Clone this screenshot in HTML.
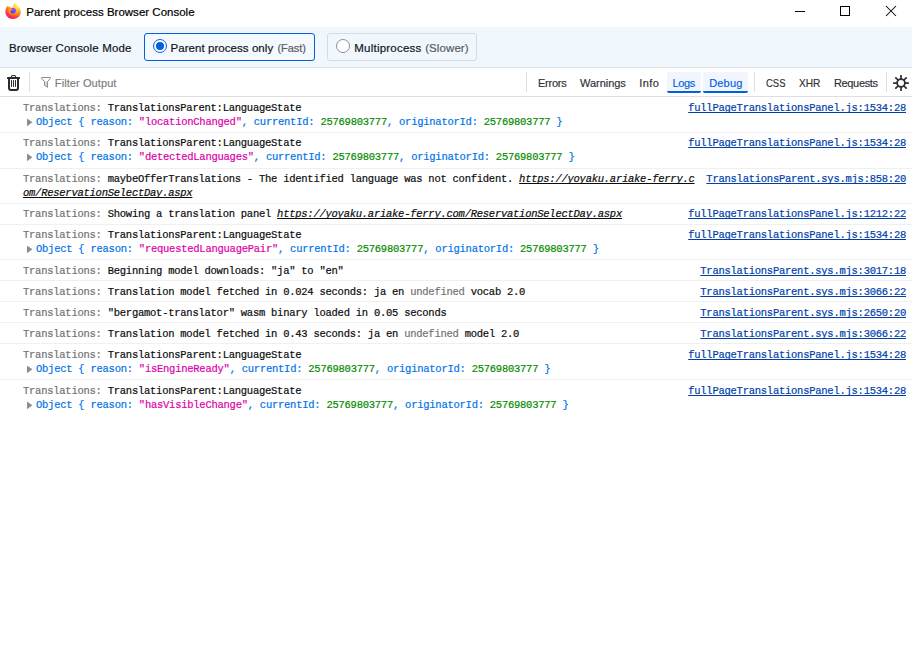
<!DOCTYPE html>
<html lang="en">
<head>
<meta charset="utf-8">
<title>Parent process Browser Console</title>
<style>
html,body{margin:0;padding:0;}
body{width:912px;height:666px;overflow:hidden;background:#fff;position:relative;
  font-family:"Liberation Sans",sans-serif;color:#0c0c0d;}
.abs{position:absolute;}
/* title bar */
#titlebar{left:0;top:0;width:912px;height:27px;background:#fff;}
/* mode bar */
#modebar{left:0;top:27px;width:912px;height:40px;background:#f0f8fe;border-bottom:1px solid #dfe3e8;}
.sans12{font-size:12px;line-height:15px;white-space:pre;color:#15141a;-webkit-text-stroke:0.2px currentColor;}
.modebtn{top:33px;height:26px;border:1px solid #d6dbe1;border-radius:3px;background:#f0f8fe;}
.modebtn.sel{border-color:#0060df;background:#f3f9ff;}
.radio{width:12px;height:12px;border-radius:50%;border:1px solid #8f8f9d;background:#fff;}
.radio.on{border-color:#0060df;}
.radio.on::after{content:"";position:absolute;left:2px;top:2px;width:8px;height:8px;border-radius:50%;background:#0060df;}
.dim{color:#5b5b66;}
/* filter toolbar */
#toolbar{left:0;top:68px;width:912px;height:28px;background:#fff;border-bottom:1px solid #e0e0e2;}
.vsep{width:1px;background:#e0e0e2;top:72px;height:20px;}
.sans11{font-size:11px;line-height:14px;white-space:pre;color:#2e2e33;-webkit-text-stroke:0.15px currentColor;}
.fbtn{top:72px;height:21px;border-radius:2px;background:#f1f5fd;overflow:hidden;}
.fbtn::after{content:"";position:absolute;left:0;right:0;bottom:0;height:2px;background:#0060df;}
.blue{color:#0060df;}
/* console output */
.row{left:0;width:912px;border-top:1px solid #f0f0f1;}
.ln{font-family:"Liberation Mono",monospace;font-size:10.5px;letter-spacing:-0.251px;line-height:14px;white-space:pre;color:#0c0c0d;-webkit-text-stroke:0.2px currentColor;}
.pre{color:#737373;}
.obj{color:#0074e8;}
.str{color:#dd00a9;}
.num{color:#058b00;}
.loc{color:#003eaa;text-decoration:underline;text-decoration-skip-ink:none;right:6px;}
.url{font-style:italic;text-decoration:underline;text-decoration-skip-ink:none;}

</style>
</head>
<body>
<div id="titlebar" class="abs"></div>
<svg class="abs" style="left:5px;top:3px" width="16" height="16" viewBox="0 0 16 16">
<defs>
<radialGradient id="fg1" gradientUnits="userSpaceOnUse" cx="11.500" cy="2" r="15"><stop offset="0" stop-color="#fff44f"/><stop offset="0.280" stop-color="#ffd43a"/><stop offset="0.500" stop-color="#ffa020"/><stop offset="0.660" stop-color="#ff7420"/><stop offset="0.800" stop-color="#ff4040"/><stop offset="0.930" stop-color="#f01a6e"/><stop offset="1" stop-color="#e31587"/></radialGradient>
<linearGradient id="fg2" x1="0.800" y1="0.100" x2="0.250" y2="0.950"><stop offset="0" stop-color="#c940f5"/><stop offset="0.500" stop-color="#7a4df0"/><stop offset="1" stop-color="#3c40d8"/></linearGradient>
<linearGradient id="fg3" x1="0" y1="0" x2="1" y2="0.600"><stop offset="0" stop-color="#ff8a16"/><stop offset="1" stop-color="#ffbd2f"/></linearGradient>
</defs>
<path d="M10.200 0.200C11.500 1.200 12.300 2.300 12.800 3.200C14.600 4.600 15.700 6.600 15.700 8.900C15.700 12.800 12.300 15.900 8.100 15.900C3.800 15.900 0.400 12.800 0.400 8.700C0.400 6.300 1.300 4.200 2.600 2.700C2.700 3.400 3 3.900 3.400 4.200C3.600 3.600 4 3.200 4.500 2.900C4.900 3.800 5.500 4.500 6.300 4.900C6.700 4.600 7.200 4.400 7.800 4.400C7.500 2.800 8.500 1 10.200 0.200Z" fill="url(#fg1)"/>
<circle cx="8.100" cy="7.600" r="2.950" fill="url(#fg2)"/>
<path d="M3.100 5.200C4.600 6 6.400 5.700 7.800 6.200C6.900 6.700 5.900 7 5.400 8.100C5 9.100 5.300 10.200 6.100 11.100C4.200 10.100 3 7.800 3.100 5.200Z" fill="url(#fg3)"/>
</svg>
<div class="abs sans12" id="title" style="left:26.25px;top:5px;font-size:11.5px;letter-spacing:0.007px;color:#000">Parent process Browser Console</div>
<svg class="abs" style="left:780px;top:0" width="132" height="27" viewBox="0 0 132 27" shape-rendering="crispEdges">
<rect x="15" y="11" width="10" height="1" fill="#000"/>
<rect x="60.5" y="6.500" width="9" height="9" fill="none" stroke="#000" stroke-width="1"/>
<g shape-rendering="geometricPrecision" stroke="#000" stroke-width="1.05" fill="none"><path d="M106 6L116 16M116 6L106 16"/></g>
</svg>
<div id="modebar" class="abs"></div>
<div class="abs sans12" id="bcm" style="left:9.00px;top:41px;font-size:11.5px;letter-spacing:0.151px;">Browser Console Mode</div>
<div class="abs modebtn sel" style="left:144px;width:169px"></div>
<div class="abs radio on" style="left:153px;top:39px"></div>
<div class="abs sans12" id="ppo" style="left:170.50px;top:41px;font-size:11.5px;letter-spacing:0.056px;">Parent process only</div>
<div class="abs sans12 dim" id="fast" style="left:277.50px;top:41px;font-size:11px;letter-spacing:-0.075px;">(Fast)</div>
<div class="abs modebtn" style="left:327px;width:148px"></div>
<div class="abs radio" style="left:336px;top:39px"></div>
<div class="abs sans12" id="mp" style="left:354.25px;top:41px;font-size:11.5px;letter-spacing:0.227px;">Multiprocess</div>
<div class="abs sans12 dim" id="slow" style="left:425.15px;top:41px;font-size:11.5px;letter-spacing:0.096px;">(Slower)</div>
<div id="toolbar" class="abs"></div>
<svg class="abs" style="left:5px;top:74px" width="16" height="18" viewBox="0 0 16 18" fill="none" stroke="#2b2b30">
<rect x="2" y="3" width="13" height="2" rx="0.600" fill="#2b2b30" stroke="none"/>
<path d="M6.500 3.200V2.600a1.100 1.100 0 0 1 1.100-1.100h1.800a1.100 1.100 0 0 1 1.100 1.100V3.200" stroke-width="1.200"/>
<path d="M4 4.500V14a2 2 0 0 0 2 2h5a2 2 0 0 0 2-2V4.500" stroke-width="2"/>
<path d="M6.500 6.500V12.500M8.500 6.500V12.500M10.500 6.500V12.500" stroke-width="1" stroke-linecap="round"/>
</svg>
<div class="abs vsep" style="left:29px"></div>
<svg class="abs" style="left:40px;top:76px" width="12" height="12" viewBox="0 0 12 12" fill="none" stroke="#8e8e93" stroke-width="1" stroke-linejoin="round">
<path d="M4.500 5.600H7.500V11.300L4.500 9.400Z" fill="#d6d6d9" stroke="none"/>
<path d="M1.500 1.500H10.500V2.300L7.500 5.600V11.300L4.500 9.400V5.600L1.500 2.300Z"/>
</svg>
<div class="abs sans11" id="fo" style="left:54.83px;top:76px;font-size:11px;letter-spacing:0.088px;color:#7a7a7e">Filter Output</div>
<div class="abs vsep" style="left:526px"></div>
<div class="abs sans11" id="t_err" style="left:537.98px;top:76px;font-size:11px;letter-spacing:-0.235px;">Errors</div>
<div class="abs sans11" id="t_warn" style="left:580.00px;top:76px;font-size:11px;letter-spacing:-0.036px;">Warnings</div>
<div class="abs sans11" id="t_info" style="left:639.35px;top:76px;font-size:11px;letter-spacing:0.400px;">Info</div>
<div class="abs fbtn" style="left:667px;width:34px"></div>
<div class="abs sans11 blue" id="t_logs" style="left:672.50px;top:76px;font-size:11px;letter-spacing:-0.333px;">Logs</div>
<div class="abs fbtn" style="left:703px;width:45px"></div>
<div class="abs sans11 blue" id="t_debug" style="left:709.25px;top:76px;font-size:11px;letter-spacing:0.156px;">Debug</div>
<div class="abs vsep" style="left:754px"></div>
<div class="abs sans11" id="t_css" style="left:766.07px;top:76px;font-size:11px;transform:scaleX(0.8598);transform-origin:0 0;">CSS</div>
<div class="abs sans11" id="t_xhr" style="left:799.46px;top:76px;font-size:11px;transform:scaleX(0.9238);transform-origin:0 0;">XHR</div>
<div class="abs sans11" id="t_req" style="left:833.90px;top:76px;font-size:11px;letter-spacing:-0.325px;">Requests</div>
<div class="abs vsep" style="left:886px"></div>
<svg class="abs" style="left:893px;top:75px" width="16" height="16" viewBox="0 0 16 16" fill="none" stroke="#2f2f33" stroke-linecap="round"><circle cx="8" cy="8" r="3.900" stroke-width="1.800"/><path d="M12.60 8.00L15.30 8.00M11.25 11.25L13.16 13.16M8.00 12.60L8.00 15.30M4.75 11.25L2.84 13.16M3.40 8.00L0.70 8.00M4.75 4.75L2.84 2.84M8.00 3.40L8.00 0.70M11.25 4.75L13.16 2.84" stroke-width="1.750"/></svg>
<div class="abs ln" style="left:23px;top:101px"><span class="pre">Translations:</span> TranslationsParent:LanguageState</div>
<svg class="abs" style="left:26px;top:118px" width="8" height="10" viewBox="0 0 8 10"><path d="M1 0.400L6.400 4.300L1 8.200Z" fill="#8c8c8c"/></svg>
<div class="abs ln" style="left:36px;top:115px"><span class="obj">Object { reason: </span><span class="str">"locationChanged"</span><span class="obj">, currentId: </span><span class="num">25769803777</span><span class="obj">, originatorId: </span><span class="num">25769803777</span><span class="obj"> }</span></div>
<div class="abs ln loc" style="top:101px">fullPageTranslationsPanel.js:1534:28</div>
<div class="abs row" style="top:132px"></div>
<div class="abs ln" style="left:23px;top:136px"><span class="pre">Translations:</span> TranslationsParent:LanguageState</div>
<svg class="abs" style="left:26px;top:153px" width="8" height="10" viewBox="0 0 8 10"><path d="M1 0.400L6.400 4.300L1 8.200Z" fill="#8c8c8c"/></svg>
<div class="abs ln" style="left:36px;top:150px"><span class="obj">Object { reason: </span><span class="str">"detectedLanguages"</span><span class="obj">, currentId: </span><span class="num">25769803777</span><span class="obj">, originatorId: </span><span class="num">25769803777</span><span class="obj"> }</span></div>
<div class="abs ln loc" style="top:136px">fullPageTranslationsPanel.js:1534:28</div>
<div class="abs row" style="top:168px"></div>
<div class="abs ln" style="left:23px;top:172px"><span class="pre">Translations:</span> maybeOfferTranslations - The identified language was not confident. <span class="url">https://yoyaku.ariake-ferry.c</span></div>
<div class="abs ln" style="left:23px;top:186px"><span class="url">om/ReservationSelectDay.aspx</span></div>
<div class="abs ln loc" style="top:172px">TranslationsParent.sys.mjs:858:20</div>
<div class="abs row" style="top:203px"></div>
<div class="abs ln" style="left:23px;top:207px"><span class="pre">Translations:</span> Showing a translation panel <span class="url">https://yoyaku.ariake-ferry.com/ReservationSelectDay.aspx</span></div>
<div class="abs ln loc" style="top:207px">fullPageTranslationsPanel.js:1212:22</div>
<div class="abs row" style="top:224px"></div>
<div class="abs ln" style="left:23px;top:228px"><span class="pre">Translations:</span> TranslationsParent:LanguageState</div>
<svg class="abs" style="left:26px;top:245px" width="8" height="10" viewBox="0 0 8 10"><path d="M1 0.400L6.400 4.300L1 8.200Z" fill="#8c8c8c"/></svg>
<div class="abs ln" style="left:36px;top:242px"><span class="obj">Object { reason: </span><span class="str">"requestedLanguagePair"</span><span class="obj">, currentId: </span><span class="num">25769803777</span><span class="obj">, originatorId: </span><span class="num">25769803777</span><span class="obj"> }</span></div>
<div class="abs ln loc" style="top:228px">fullPageTranslationsPanel.js:1534:28</div>
<div class="abs row" style="top:259px"></div>
<div class="abs ln" style="left:23px;top:264px"><span class="pre">Translations:</span> Beginning model downloads: "ja" to "en"</div>
<div class="abs ln loc" style="top:264px">TranslationsParent.sys.mjs:3017:18</div>
<div class="abs row" style="top:280px"></div>
<div class="abs ln" style="left:23px;top:285px"><span class="pre">Translations:</span> Translation model fetched in 0.024 seconds: ja en <span class="pre">undefined</span> vocab 2.0</div>
<div class="abs ln loc" style="top:285px">TranslationsParent.sys.mjs:3066:22</div>
<div class="abs row" style="top:301px"></div>
<div class="abs ln" style="left:23px;top:306px"><span class="pre">Translations:</span> "bergamot-translator" wasm binary loaded in 0.05 seconds</div>
<div class="abs ln loc" style="top:306px">TranslationsParent.sys.mjs:2650:20</div>
<div class="abs row" style="top:322px"></div>
<div class="abs ln" style="left:23px;top:327px"><span class="pre">Translations:</span> Translation model fetched in 0.43 seconds: ja en <span class="pre">undefined</span> model 2.0</div>
<div class="abs ln loc" style="top:327px">TranslationsParent.sys.mjs:3066:22</div>
<div class="abs row" style="top:343px"></div>
<div class="abs ln" style="left:23px;top:348px"><span class="pre">Translations:</span> TranslationsParent:LanguageState</div>
<svg class="abs" style="left:26px;top:365px" width="8" height="10" viewBox="0 0 8 10"><path d="M1 0.400L6.400 4.300L1 8.200Z" fill="#8c8c8c"/></svg>
<div class="abs ln" style="left:36px;top:362px"><span class="obj">Object { reason: </span><span class="str">"isEngineReady"</span><span class="obj">, currentId: </span><span class="num">25769803777</span><span class="obj">, originatorId: </span><span class="num">25769803777</span><span class="obj"> }</span></div>
<div class="abs ln loc" style="top:348px">fullPageTranslationsPanel.js:1534:28</div>
<div class="abs row" style="top:379px"></div>
<div class="abs ln" style="left:23px;top:384px"><span class="pre">Translations:</span> TranslationsParent:LanguageState</div>
<svg class="abs" style="left:26px;top:401px" width="8" height="10" viewBox="0 0 8 10"><path d="M1 0.400L6.400 4.300L1 8.200Z" fill="#8c8c8c"/></svg>
<div class="abs ln" style="left:36px;top:398px"><span class="obj">Object { reason: </span><span class="str">"hasVisibleChange"</span><span class="obj">, currentId: </span><span class="num">25769803777</span><span class="obj">, originatorId: </span><span class="num">25769803777</span><span class="obj"> }</span></div>
<div class="abs ln loc" style="top:384px">fullPageTranslationsPanel.js:1534:28</div>
</body>
</html>
